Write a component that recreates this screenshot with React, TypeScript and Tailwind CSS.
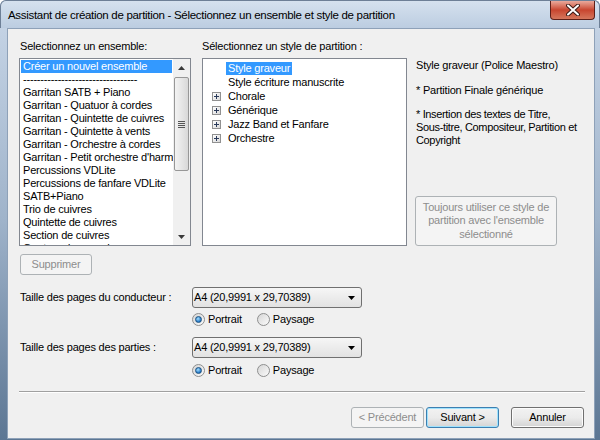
import React from 'react';

const ensembles = [
  'Garritan SATB + Piano',
  'Garritan - Quatuor à cordes',
  'Garritan - Quintette de cuivres',
  'Garritan - Quintette à vents',
  'Garritan - Orchestre à cordes',
  "Garritan - Petit orchestre d'harmonie",
  'Percussions VDLite',
  'Percussions de fanfare VDLite',
  'SATB+Piano',
  'Trio de cuivres',
  'Quintette de cuivres',
  'Section de cuivres',
  'Quatuor de saxophones',
];

const styles = [
  { label: 'Style graveur', plus: false, selected: true },
  { label: 'Style écriture manuscrite', plus: false },
  { label: 'Chorale', plus: true },
  { label: 'Générique', plus: true },
  { label: 'Jazz Band et Fanfare', plus: true },
  { label: 'Orchestre', plus: true },
];

function Arrow({ down }: { down?: boolean }) {
  return (
    <svg width="7" height="4" viewBox="0 0 7 4">
      <path d={down ? 'M0 0h7L3.5 4z' : 'M0 4h7L3.5 0z'} fill="#3a3a3a" />
    </svg>
  );
}

function Button({
  children,
  disabled,
  primary,
  className = '',
}: {
  children: React.ReactNode;
  disabled?: boolean;
  primary?: boolean;
  className?: string;
}) {
  if (disabled) {
    return (
      <div
        className={`flex items-center justify-center rounded-[3px] border border-[#adb2b5] bg-[#f4f4f4] text-[#8d8d8d] ${className}`}
      >
        {children}
      </div>
    );
  }
  return (
    <div
      className={`flex items-center justify-center rounded-[3px] border ${
        primary ? 'border-[#3c7fb1] shadow-[inset_0_0_0_1px_#9fe2fd]' : 'border-[#707070] shadow-[inset_0_0_0_1px_#fcfcfc]'
      } bg-gradient-to-b from-[#f2f2f2] via-[#ebebeb] to-[#d4d4d4] text-black ${className}`}
    >
      {children}
    </div>
  );
}

function Radio({ checked, label }: { checked?: boolean; label: string }) {
  return (
    <div className="flex items-center gap-[3px]">
      <div className="flex h-[13px] w-[13px] items-center justify-center rounded-full border border-[#8e8f8f] bg-gradient-to-br from-[#d6d6d6] to-[#fbfbfb]">
        {checked && (
          <div className="h-[7px] w-[7px] rounded-full border border-[#1c5180] bg-[radial-gradient(circle_at_40%_35%,#a6e0ff,#1f74c4_70%)]" />
        )}
      </div>
      <span>{label}</span>
    </div>
  );
}

function Combo({ value }: { value: string }) {
  return (
    <div className="flex h-[21px] w-[170px] items-center justify-between rounded-[3px] border border-[#707070] bg-gradient-to-b from-[#f6f6f6] to-[#e2e2e2] pl-[1px] pr-[6px]">
      <span>{value}</span>
      <svg width="7" height="4" viewBox="0 0 7 4">
        <path d="M0 0h7L3.5 4z" fill="#000" />
      </svg>
    </div>
  );
}

function PlusBox() {
  return (
    <div className="flex h-[9px] w-[9px] items-center justify-center border border-[#919191] bg-gradient-to-br from-white to-[#d8d8d8]">
      <svg width="5" height="5" viewBox="0 0 5 5">
        <path d="M0 2.5h5M2.5 0v5" stroke="#2a3a5a" strokeWidth="1" />
      </svg>
    </div>
  );
}

export default function App() {
  return (
    <div
      className="flex h-[440px] w-[600px] flex-col rounded-t-[6px] bg-gradient-to-b from-[#c9d7e8] via-[#9fb3ca] to-[#5c7693] text-[11px] tracking-[-0.2px] text-black"
      style={{ fontFamily: '"Liberation Sans", Arial, sans-serif' }}
    >
      {/* title bar */}
      <div className="flex h-[28px] items-start justify-between rounded-t-[6px] border border-b-0 border-[#6d7f96] bg-gradient-to-b from-[#d5e1ee] to-[#bccde1]">
        <span className="mt-[6px] ml-[7px] whitespace-nowrap text-[11.5px] tracking-[-0.3px] text-black">
          Assistant de création de partition - Sélectionnez un ensemble et style de partition
        </span>
        <div className="mr-[4px] flex h-[19px] w-[45px] items-center justify-center rounded-b-[4px] border border-t-0 border-[#5e1f18] bg-gradient-to-b from-[#e9a99c] via-[#c8452f] to-[#d5765c]">
          <svg width="14" height="12" viewBox="0 0 14 12">
            <path d="M2 1.5l10 9M12 1.5l-10 9" stroke="#3b1a16" strokeWidth="4" strokeLinecap="round" />
            <path d="M2 1.5l10 9M12 1.5l-10 9" stroke="#fff" strokeWidth="2" strokeLinecap="round" />
          </svg>
        </div>
      </div>

      {/* client area */}
      <div className="mb-[1px] ml-[7px] mr-[5px] flex flex-1 flex-col border border-[#8ea1b8] bg-[#f0f0f0] pl-[11px] pr-[9px] pt-[11px]">
        <div className="flex">
          {/* ensembles */}
          <div className="flex w-[172px] flex-col">
            <div className="ml-[1px] h-[18px] leading-[13px]">Selectionnez un ensemble:</div>
            <div className="flex h-[188px] overflow-hidden border border-[#828790] bg-white">
              <div className="flex-1 overflow-hidden p-[1px] leading-[13px]">
                <div className="h-[13px] whitespace-nowrap bg-[#3399ff] pl-[2px] text-white">Créer un nouvel ensemble</div>
                <div className="h-[13px] whitespace-nowrap pl-[2px]">---------------------------------</div>
                {ensembles.map((e) => (
                  <div key={e} className="h-[13px] whitespace-nowrap pl-[2px]">
                    {e}
                  </div>
                ))}
              </div>
              <div className="flex w-[17px] flex-col bg-[#f0f0f0]">
                <div className="flex h-[17px] items-center justify-center">
                  <Arrow />
                </div>
                <div className="mx-[1px] mt-[1px] flex h-[94px] items-center justify-center rounded-[2px] border border-[#979797] bg-gradient-to-r from-[#f3f3f3] via-[#e6e6e6] to-[#d8d8d8]">
                  <div className="flex flex-col gap-[1px]">
                    <div className="h-[1px] w-[7px] bg-[#555]" />
                    <div className="h-[1px] w-[7px] bg-[#555]" />
                    <div className="h-[1px] w-[7px] bg-[#555]" />
                    <div className="h-[1px] w-[7px] bg-[#555]" />
                  </div>
                </div>
                <div className="flex-1" />
                <div className="flex h-[17px] items-center justify-center">
                  <Arrow down />
                </div>
              </div>
            </div>
          </div>

          {/* styles tree */}
          <div className="ml-[11px] flex w-[205px] flex-col">
            <div className="h-[18px] leading-[13px]">Sélectionnez un style de partition :</div>
            <div className="h-[188px] border border-[#828790] bg-white pt-[2px]">
              {styles.map((s) => (
                <div key={s.label} className="flex h-[14px] items-center">
                  <div className="ml-[9px] w-[9px]">{s.plus && <PlusBox />}</div>
                  <span
                    className={`ml-[5px] px-[2px] leading-[13px] ${s.selected ? 'bg-[#3399ff] text-white' : ''}`}
                  >
                    {s.label}
                  </span>
                </div>
              ))}
            </div>
          </div>

          {/* description */}
          <div className="ml-[8px] flex flex-1 flex-col whitespace-nowrap pt-[19px] leading-[13px]">
            <div className="pl-[1px]">Style graveur (Police Maestro)</div>
            <div className="mt-[12px] pl-[1px]">* Partition Finale générique</div>
            <div className="mt-[11px] pl-[1px] tracking-[-0.35px]">
              * Insertion des textes de Titre,
              <br />
              Sous-titre, Compositeur, Partition et
              <br />
              Copyright
            </div>
            <Button disabled className="mt-auto h-[50px] w-[142px] flex-col text-center leading-[13.5px]">
              <span>Toujours utiliser ce style de</span>
              <span>partition avec l'ensemble</span>
              <span>sélectionné</span>
            </Button>
          </div>
        </div>

        <Button disabled className="ml-[1px] mt-[8px] h-[21px] w-[72px]">
          Supprimer
        </Button>

        <div className="mt-[12px] flex items-center">
          <div className="ml-[1px] w-[172px]">Taille des pages du conducteur :</div>
          <Combo value="A4 (20,9991 x 29,70389)" />
        </div>
        <div className="ml-[173px] mt-[2px] flex h-[18px] items-center gap-[15px]">
          <Radio checked label="Portrait" />
          <Radio label="Paysage" />
        </div>

        <div className="mt-[9px] flex items-center">
          <div className="ml-[1px] w-[172px]">Taille des pages des parties :</div>
          <Combo value="A4 (20,9991 x 29,70389)" />
        </div>
        <div className="ml-[173px] mt-[3px] flex h-[18px] items-center gap-[15px]">
          <Radio checked label="Portrait" />
          <Radio label="Paysage" />
        </div>

        <div className="mt-[12px] border-t border-b border-t-[#a0a0a0] border-b-white" />

        <div className="mt-[14px] flex justify-end pr-[1px]">
          <Button disabled className="h-[21px] w-[73px]">
            &lt; Précédent
          </Button>
          <Button primary className="ml-[2px] h-[21px] w-[73px]">
            Suivant &gt;
          </Button>
          <Button className="ml-[12px] h-[21px] w-[73px]">
            Annuler
          </Button>
        </div>
      </div>
    </div>
  );
}
